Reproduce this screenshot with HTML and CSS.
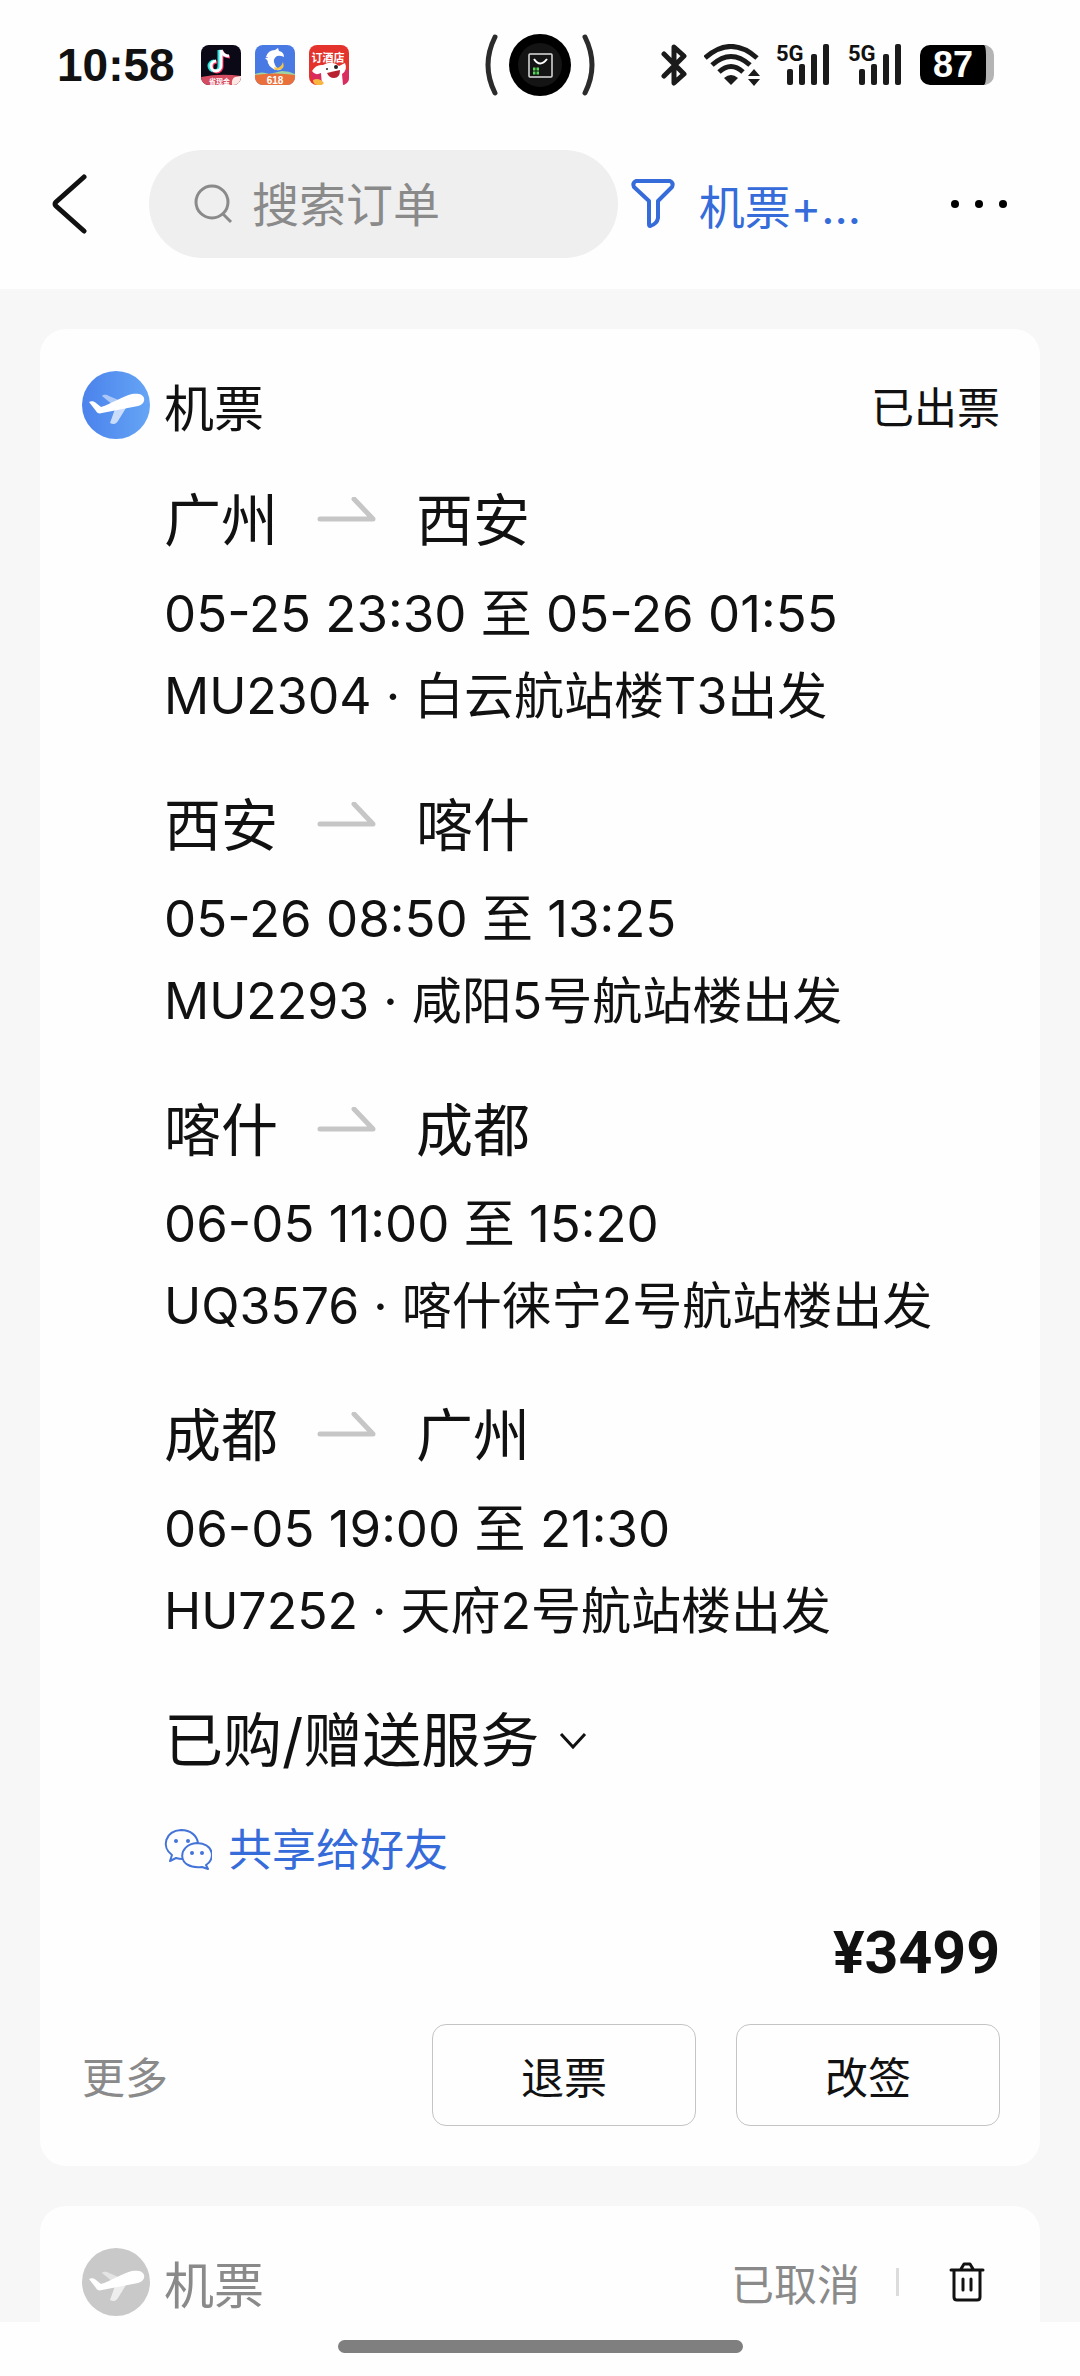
FILE: index.html
```html
<!DOCTYPE html>
<html lang="zh-CN">
<head>
    <meta charset="UTF-8">
    <meta name="viewport" content="width=device-width, initial-scale=1.0">
    <title>我的订单</title>
    <link rel="stylesheet" href="styles.css">
</head>
<body>
    <!-- Shared icons -->
    <svg class="sprite" aria-hidden="true">
        <symbol id="arrow" viewBox="0 0 60 48">
            <path d="M3 22H56L37 2" fill="none" stroke="#c6c6c6" stroke-width="5" stroke-linecap="round" stroke-linejoin="round"/>
        </symbol>
        <symbol id="plane" viewBox="0 0 68 68">
            <circle cx="34" cy="34" r="34"/>
            <path d="M20 25c2-2 5-1 7 0l12 5-8 4z" fill="#fff" opacity=".5"/>
            <path d="M29 37l18-5-11 18c-2 3-4 4-8 2l5-14z" fill="#fff" opacity=".68"/>
            <path d="M7 31c2-1 5-1 7 1l5 4c10-3 22-11 31-13 6-1 11 0 12 4s-2 7-6 8L20 42c-3 1-5 0-6-2z" fill="#fff"/>
        </symbol>
        <symbol id="signal" viewBox="0 0 56 42">
            <g fill="#1b1b1b">
                <rect x="11" y="25" width="6" height="16" rx="2"/>
                <rect x="23" y="20" width="6" height="21" rx="2"/>
                <rect x="35" y="10" width="6" height="31" rx="2"/>
                <rect x="47" y="0" width="6" height="41" rx="2"/>
            </g>
        </symbol>
    </svg>

    <div class="status-bar">
        <div class="status-left">
            <span class="time">10:58</span>
            <svg class="app-icon" viewBox="0 0 40 40">
                <rect width="40" height="40" rx="8" fill="#0b0915"/>
                <path d="M0 32q20-4 40-1v1a8 8 0 0 1-8 8H8a8 8 0 0 1-8-8z" fill="#d54b60"/>
                <path d="M31 40q-1-6 3-8l6-1v1a8 8 0 0 1-8 8z" fill="#ffe9e4"/>
                <path d="M19 5v16a5 5 0 1 1-5-5M19 5q2 6 8 6" transform="translate(-1 0)" fill="none" stroke="#25e6e0" stroke-width="3"/>
                <path d="M20 6v16a5 5 0 1 1-5-5M20 6q2 6 8 6" transform="translate(1 0)" fill="none" stroke="#fb3360" stroke-width="3"/>
                <path d="M20 5v16a5 5 0 1 1-5-5M20 5q2 6 8 6" fill="none" stroke="#fff" stroke-width="3"/>
                <text x="8" y="39" class="badge-text small">省现金</text>
            </svg>
            <svg class="app-icon" viewBox="0 0 40 40">
                <rect width="40" height="40" rx="8" fill="#497ae4"/>
                <path d="M0 29q7-3 14 0l13-3q7 0 13 3v4H0z" fill="#9fd3a2"/>
                <path d="M0 30q20-3 40 0v2a8 8 0 0 1-8 8H8a8 8 0 0 1-8-8z" fill="#e9703b"/>
                <path d="M11 12q2-7 9-7l3-2 1 3q5 1 5 6-4-2-7-1-5 3-2 9 2 5 7 4-5 3-10-1-6-4-4-11z" fill="#fff"/>
                <path d="M19 22q6 3 9-5 3 9-8 8z" fill="#f5c447"/>
                <path d="M10 13l6-1-1 6z" fill="#fff"/>
                <text x="20" y="39" text-anchor="middle" class="badge-text">618</text>
            </svg>
            <svg class="app-icon" viewBox="0 0 40 40">
                <rect width="40" height="40" rx="8" fill="#e4332d"/>
                <path d="M2 27q10-7 38-2v8a7 7 0 0 1-7 7H8q-6-3-6-13z" fill="#d92d60"/>
                <text x="19" y="17" text-anchor="middle" class="badge-text promo">订酒店</text>
                <path d="M14 20q9-5 16 1l6-3q3 7-3 11l1 11H13l-1-12q-6 3-9-2 4-7 11-6z" fill="#fff"/>
                <path d="M18 28q8-2 13-3 0 8-6 8-5 0-7-5z" fill="#b82130"/>
                <circle cx="18" cy="24" r="1" fill="#222"/>
                <circle cx="27" cy="22" r="2" fill="#222"/>
                <path d="M4 35q6-3 11 3l-2 2H8q-4-1-4-5z" fill="#f7b640"/>
            </svg>
        </div>

        <svg class="island" viewBox="0 0 112 62">
            <path d="M11 3Q-3 31 11 59M101 3q14 28 0 56" fill="none" stroke="#2b2b2b" stroke-width="5" stroke-linecap="round"/>
            <circle cx="56" cy="31" r="31"/>
            <circle cx="56" cy="31" r="22" fill="#141414"/>
            <rect x="45" y="20" width="23" height="23" rx="1" fill="none" stroke="#ddd" stroke-width="1.5"/>
            <path d="M50 25q6 9 13 0" fill="none" stroke="#fff" stroke-width="2"/>
            <path d="M49 35h6M49 39h6" stroke="#55d855" stroke-width="3" stroke-dasharray="2.5 1"/>
        </svg>

        <div class="status-right">
            <svg class="bluetooth" viewBox="0 0 27 42">
                <path d="M3 10l20 20-10 9V3l10 9L3 32" fill="none" stroke="#1b1b1b" stroke-width="5" stroke-linecap="round" stroke-linejoin="round"/>
            </svg>
            <svg class="wifi" viewBox="0 0 56 42">
                <g fill="none" stroke="#1b1b1b" stroke-width="5">
                    <path d="M1 14Q27-9 53 14"/>
                    <path d="M8 21Q27 4 46 21"/>
                    <path d="M15 28Q27 17 39 28"/>
                </g>
                <path d="M20 34q7-6 14 0l-7 7z" fill="#1b1b1b"/>
                <path d="M44 32l6-7 6 7zM44 35h12l-6 7z" fill="#1b1b1b"/>
            </svg>
            <div class="network">
                <svg viewBox="0 0 56 42"><use href="#signal"/></svg>
                <span>5G</span>
            </div>
            <div class="network">
                <svg viewBox="0 0 56 42"><use href="#signal"/></svg>
                <span>5G</span>
            </div>
            <div class="battery"><span>87</span></div>
        </div>
    </div>

    <header class="nav">
        <button class="back" aria-label="返回">
            <svg viewBox="0 0 36 60"><path d="M33 3L5 28q-2 2 0 4l28 25" fill="none" stroke="#111" stroke-width="5" stroke-linecap="round"/></svg>
        </button>
        <label class="search">
            <svg viewBox="0 0 40 40"><circle cx="18" cy="18" r="16" fill="none" stroke="#8a8a8a" stroke-width="3"/><path d="M29 30l8 8" stroke="#8a8a8a" stroke-width="3"/></svg>
            <input type="search" placeholder="搜索订单" aria-label="搜索订单">
        </label>
        <button class="filter">
            <svg viewBox="0 0 44 50"><path d="M5 2h34q4 2 2 6L27 22v17q-1 6-8 8-1 0-1-2V22L3 8Q1 4 5 2z" fill="none" stroke="#366bda" stroke-width="4" stroke-linejoin="round"/></svg>
            <span>机票+...</span>
        </button>
        <button class="menu" aria-label="菜单">
            <svg viewBox="0 0 60 10"><circle cx="6" cy="5" r="4"/><circle cx="30" cy="5" r="4"/><circle cx="54" cy="5" r="4"/></svg>
        </button>
    </header>

    <main class="orders">
        <article class="card">
            <div class="card-head">
                <svg class="type-icon" viewBox="0 0 68 68">
                    <defs>
                        <linearGradient id="sky"><stop offset="0" stop-color="#4b82ec"/><stop offset="1" stop-color="#65a5f5"/></linearGradient>
                    </defs>
                    <use href="#plane" fill="url(#sky)"/>
                </svg>
                <h2>机票</h2>
                <span class="state">已出票</span>
            </div>

            <div class="card-body">
                <section class="flight">
                    <h3>广州<svg viewBox="0 0 60 48"><use href="#arrow"/></svg>西安</h3>
                    <p class="date">05-25 23:30 至 05-26 01:55</p>
                    <p>MU2304 · 白云航站楼T3出发</p>
                </section>
                <section class="flight">
                    <h3>西安<svg viewBox="0 0 60 48"><use href="#arrow"/></svg>喀什</h3>
                    <p class="date">05-26 08:50 至 13:25</p>
                    <p>MU2293 · 咸阳5号航站楼出发</p>
                </section>
                <section class="flight">
                    <h3>喀什<svg viewBox="0 0 60 48"><use href="#arrow"/></svg>成都</h3>
                    <p class="date">06-05 11:00 至 15:20</p>
                    <p>UQ3576 · 喀什徕宁2号航站楼出发</p>
                </section>
                <section class="flight">
                    <h3>成都<svg viewBox="0 0 60 48"><use href="#arrow"/></svg>广州</h3>
                    <p class="date">06-05 19:00 至 21:30</p>
                    <p>HU7252 · 天府2号航站楼出发</p>
                </section>
                <button class="services">
                    已购/赠送服务
                    <svg viewBox="0 0 28 18"><path d="M2 2l12 13L26 2" fill="none" stroke="#111" stroke-width="3"/></svg>
                </button>
                <button class="share">
                    <svg viewBox="0 0 48 42">
                        <g fill="none" stroke="#4474d8" stroke-width="2" stroke-linejoin="round">
                            <path d="M19 30q-4 0-7-1l-6 3 2-6C-3 18 1 2 17 1c10 0 16 6 17 13"/>
                            <path d="M33 14c18 1 18 17 9 22l2 4-6-2C12 41 13 15 33 14z"/>
                        </g>
                        <g fill="#4474d8"><circle cx="12" cy="12" r="2"/><circle cx="24" cy="12" r="2"/><circle cx="28" cy="24" r="2"/><circle cx="38" cy="24" r="2"/></g>
                    </svg>
                    共享给好友
                </button>
            </div>

            <div class="price">¥3499</div>
            <div class="actions">
                <button class="more">更多</button>
                <button class="btn">退票</button>
                <button class="btn">改签</button>
            </div>
        </article>

        <article class="card cancelled">
            <div class="card-head">
                <svg class="type-icon" viewBox="0 0 68 68"><use href="#plane" fill="#c9c9c9"/></svg>
                <h2>机票</h2>
                <span class="state">已取消</span>
                <button class="delete" aria-label="删除">
                    <svg viewBox="0 0 36 40">
                        <g fill="none" stroke="#111" stroke-width="3" stroke-linecap="round" stroke-linejoin="round">
                            <path d="M2 8h32M5 8v27q0 3 3 3h20q3 0 3-3V8M12 7l3-5h6l3 5"/>
                            <path d="M14 17v11M22 17v11"/>
                        </g>
                    </svg>
                </button>
            </div>
        </article>
    </main>

    <div class="home-bar"></div>
</body>
</html>
```

FILE: styles.css
```css
* {
    margin: 0;
    padding: 0;
    box-sizing: border-box;
}

body {
    min-height: 100vh;
    display: flex;
    flex-direction: column;
    font-family: Inter, "Noto Sans CJK SC", sans-serif;
    background: #fefefe;
    color: #111;
}

button {
    border: none;
    background: none;
    font: inherit;
    color: inherit;
    cursor: pointer;
}

svg {
    display: block;
    flex: none;
}

h2,
h3 {
    font-weight: 400;
}

.sprite {
    position: absolute;
    width: 0;
    height: 0;
}

/* Status bar */
.status-bar {
    display: grid;
    grid-template-columns: 1fr auto 1fr;
    align-items: center;
    height: 130px;
    padding: 0 57px;
    font-family: "Liberation Sans", sans-serif;
    font-weight: 700;
}

.status-left,
.status-right {
    display: flex;
    align-items: center;
}

.status-left {
    gap: 14px;
}

.status-right {
    justify-content: flex-end;
    gap: 16px;
    padding-right: 29px;
}

.time {
    margin-right: 12px;
    font-size: 46px;
}

.app-icon {
    width: 40px;
    height: 40px;
}

.badge-text {
    font-family: "Liberation Sans", "Noto Sans CJK SC", sans-serif;
    font-size: 10px;
    font-weight: 700;
    fill: #fff;
}

.small {
    font-size: 7px;
}

.promo {
    font-size: 11px;
}

.island {
    width: 112px;
    height: 62px;
}

.bluetooth {
    width: 27px;
    height: 42px;
}

.wifi {
    width: 56px;
    height: 42px;
}

.network {
    position: relative;
}

.network svg {
    width: 56px;
    height: 42px;
}

.network span {
    position: absolute;
    top: -2px;
    left: 0;
    font-family: Roboto, sans-serif;
    font-size: 22px;
    line-height: 24px;
}

.battery {
    display: flex;
    align-items: center;
    justify-content: center;
    width: 74px;
    height: 40px;
    border-right: 8px solid #b4b4b4;
    border-radius: 10px;
    background: #000;
    color: #fff;
    font-size: 36px;
}

/* Navigation */
.nav {
    display: flex;
    align-items: center;
    padding: 20px 71px 31px 51px;
}

.back svg {
    width: 36px;
    height: 60px;
}

.search {
    display: flex;
    flex: 1;
    align-items: center;
    gap: 18px;
    min-width: 0;
    height: 108px;
    margin-left: 62px;
    padding: 0 45px;
    border-radius: 54px;
    background: #efefef;
}

.search svg {
    width: 40px;
    height: 40px;
}

.search input {
    flex: 1;
    min-width: 0;
    border: none;
    outline: none;
    background: none;
    font-family: inherit;
    font-size: 47px;
}

.search input::placeholder {
    color: #8a8a8a;
}

.filter {
    display: flex;
    align-items: center;
    gap: 24px;
    margin: 0 88px 0 13px;
    color: #366bda;
    font-size: 46px;
}

.filter svg {
    width: 44px;
    height: 50px;
}

.menu svg {
    width: 60px;
    height: 10px;
}

/* Orders */
.orders {
    display: flex;
    flex: 1;
    flex-direction: column;
    gap: 40px;
    padding: 40px 40px 0;
    background: #f7f7f7;
}

.card {
    padding: 40px;
    border-radius: 26px;
    background: #fefefe;
}

.card-head {
    display: flex;
    align-items: center;
    height: 72px;
    margin-bottom: 28px;
}

.type-icon {
    width: 68px;
    height: 68px;
    margin: 0 14px 0 2px;
}

.card-head h2 {
    font-size: 50px;
}

.state {
    margin-left: auto;
    font-size: 43px;
}

.card-body {
    padding-left: 84px;
}

.flight {
    margin-bottom: 37px;
}

.flight h3 {
    display: flex;
    align-items: center;
    gap: 39px;
    font-size: 57px;
    line-height: 104px;
}

.flight h3 svg {
    width: 60px;
    height: 48px;
}

.flight p {
    font-size: 50px;
    line-height: 82px;
    white-space: nowrap;
}

.flight .date {
    font-size: 51px;
}

.services {
    display: flex;
    align-items: center;
    gap: 20px;
    font-size: 59px;
    line-height: 104px;
}

.services svg {
    width: 28px;
    height: 18px;
}

.share {
    display: flex;
    align-items: center;
    gap: 16px;
    color: #366bda;
    font-size: 44px;
    line-height: 114px;
}

.share svg {
    width: 48px;
    height: 42px;
}

.price {
    font-family: Roboto, sans-serif;
    font-size: 59px;
    font-weight: 700;
    line-height: 92px;
    text-align: right;
}

.actions {
    display: flex;
    align-items: center;
    gap: 40px;
    margin-top: 25px;
    font-size: 43px;
}

.more {
    margin-right: auto;
    padding-left: 2px;
    color: #8a8a8a;
}

.btn {
    width: 264px;
    height: 102px;
    border: 1px solid #c4c4c4;
    border-radius: 14px;
}

.cancelled {
    padding-bottom: 4px;
    border-radius: 26px 26px 0 0;
    color: #8a8a8a;
}

.cancelled .card-head {
    margin-bottom: 0;
}

.delete {
    display: flex;
    align-items: center;
    height: 28px;
    margin-left: 36px;
    padding: 0 15px 0 50px;
    border-left: 3px solid #dcdcdc;
}

.delete svg {
    width: 36px;
    height: 40px;
}

.home-bar {
    height: 55px;
    padding-top: 18px;
}

.home-bar::before {
    content: "";
    display: block;
    width: 405px;
    height: 13px;
    margin: 0 auto;
    border-radius: 7px;
    background: #7f7f7f;
}
```
